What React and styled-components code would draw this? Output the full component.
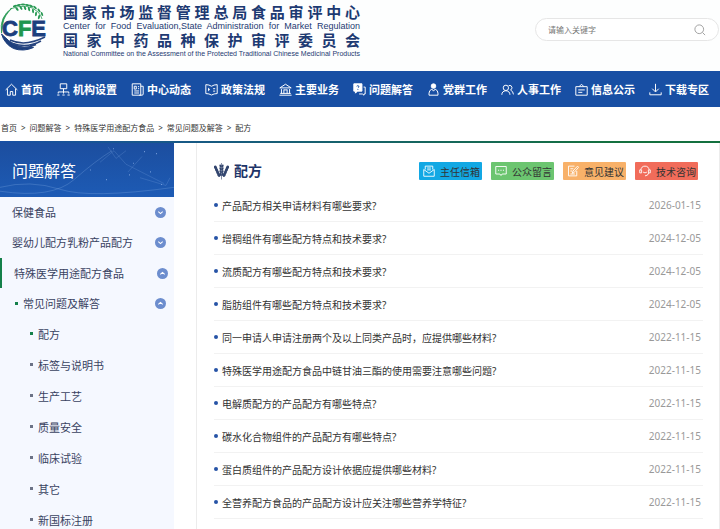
import React from 'react';
import styled, { createGlobalStyle } from 'styled-components';

const GlobalStyle = createGlobalStyle`
  * {
    box-sizing: border-box;
  }
  body {
    margin: 0;
    background: #fff;
    color: #333;
    font-family: "Noto Sans", "Noto Sans CJK SC", sans-serif;
    font-size: 10px;
  }
  a {
    color: inherit;
    text-decoration: none;
  }
  ul, ol {
    margin: 0;
    padding: 0;
    list-style: none;
  }
  button {
    border: 0;
    padding: 0;
    background: none;
    cursor: pointer;
  }
`;

const navItems = [
  { label: '首页', icon: 'home' },
  { label: '机构设置', icon: 'org' },
  { label: '中心动态', icon: 'news' },
  { label: '政策法规', icon: 'policy' },
  { label: '主要业务', icon: 'bank' },
  { label: '问题解答', icon: 'faq' },
  { label: '党群工作', icon: 'person' },
  { label: '人事工作', icon: 'people' },
  { label: '信息公示', icon: 'board' },
  { label: '下载专区', icon: 'download' },
];

const crumbs = ['首页', '问题解答', '特殊医学用途配方食品', '常见问题及解答', '配方'];

const leaves = ['配方', '标签与说明书', '生产工艺', '质量安全', '临床试验', '其它', '新国标注册'];

const services = [
  { label: '主任信箱', icon: 'mail', color: '#12a8e4' },
  { label: '公众留言', icon: 'chat', color: '#6cc570' },
  { label: '意见建议', icon: 'note', color: '#f8b169' },
  { label: '技术咨询', icon: 'headset', color: '#f16c5a' },
];

const questions = [
  { title: '产品配方相关申请材料有哪些要求?', date: '2026-01-15' },
  { title: '增稠组件有哪些配方特点和技术要求?', date: '2024-12-05' },
  { title: '流质配方有哪些配方特点和技术要求?', date: '2024-12-05' },
  { title: '脂肪组件有哪些配方特点和技术要求?', date: '2024-12-05' },
  { title: '同一申请人申请注册两个及以上同类产品时，应提供哪些材料?', date: '2022-11-15' },
  { title: '特殊医学用途配方食品中链甘油三酯的使用需要注意哪些问题?', date: '2022-11-15' },
  { title: '电解质配方的产品配方有哪些特点?', date: '2022-11-15' },
  { title: '碳水化合物组件的产品配方有哪些特点?', date: '2022-11-15' },
  { title: '蛋白质组件的产品配方设计依据应提供哪些材料?', date: '2022-11-15' },
  { title: '全营养配方食品的产品配方设计应关注哪些营养学特征?', date: '2022-11-15' },
];

const icons = {
  home: <path d="M.8 8.500 8 1.500l7.200 7M3 7v8h3.500v-4.500h3V15H13V7" />,
  org: (
    <>
      <path d="M4 1h8v6H4zM8 7v4M1.500 13v-2h13v2" />
      <path d="M.3 14.800h2.800M6.600 14.800h2.800M12.900 14.800h2.800M8 11v2" />
    </>
  ),
  news: (
    <>
      <path d="M1.500 1h10.500v14H1.500zM12 4h3v9.500q0 1.500-1.500 1.500H10" />
      <path d="M4 4h2.500v3.500H4zM8.500 4.500H10M8.500 7H10M4 9.800h6M4 12.300h6" />
    </>
  ),
  policy: (
    <>
      <path d="M1 2q4 0 7 2 3-2 7-2v11q-4 0-7 1.800Q5 13 1 13z" />
      <path d="M4.500 6v4M3.800 8h2M10 7h2.500M10 10h2.500" />
    </>
  ),
  bank: (
    <>
      <path d="M1 6 8 1.500 15 6zM3 7.500V13M6 8v5M10 8v5M13 7.500V13" />
      <path d="M1.500 12.800h13M.5 15h15M6 8.500h4" />
    </>
  ),
  faq: (
    <>
      <path d="M1 1h10v9H5.500L3 12.500V10H1z" fill="#fff" />
      <path d="M13 5h2v8.500h-1.500V15l-2-1.500H7.500" />
      <path d="M4.500 4Q6 2.500 7.300 4 7.500 5.200 6 6M6 7.500v1" stroke="#184fa4" />
    </>
  ),
  person: (
    <>
      <circle cx="8" cy="3.800" r="2.800" fill="#fff" />
      <path d="M6 7.500Q2.500 9 2.500 12.500V15h11v-2.500Q13.500 9 10 7.500L8 10z" />
    </>
  ),
  people: (
    <>
      <circle cx="6" cy="6" r="3.300" />
      <path d="M1 14.500Q1 10 6 9.500q5 .5 5 5M9.500 3q3.500-.8 4 2.500.1 2-1.800 3.200Q15 10 15.300 14" />
    </>
  ),
  board: (
    <>
      <path d="M1 4.500h14V15H1zM5 4.500 8 1.500l3 3" />
      <path d="M4 8.500h8M4 11.500h5" />
    </>
  ),
  download: <path d="M8 1v9.500M4 7l4 4 4-4M1 11.500v3h14v-3" />,
  search: (
    <>
      <circle cx="7" cy="7" r="5.800" />
      <path d="m11.300 11.300 3.500 3.500" />
    </>
  ),
  mail: (
    <>
      <path d="M3 6V1.500h10V6M1 6l7 5 7-5v9H1zM5.500 4h5M5.500 6.500h5" />
    </>
  ),
  chat: (
    <>
      <path d="M1 2h14v10H9.500L8 14l-1.500-2H1z" />
      <path d="M4 7h1.500M7.200 7h1.600M10.500 7H12" />
    </>
  ),
  note: (
    <>
      <path d="M13 8v6.500H2v-13h8" />
      <path d="M4.500 5h4M4.500 8h2.500M7 11l1-3 6-6.500L15.500 3 9.500 10zM4.500 12h6" />
    </>
  ),
  headset: (
    <>
      <path d="M2.500 7Q3 1.500 8 1.500T13.500 7M2.500 6.500H1v4h2.500v-4M13.500 6.500H15v4h-2.500v-4M13 10.500Q12 14.500 8 14.500" />
      <path d="M5.500 9.500q2.500 2 5 0" />
    </>
  ),
};

const Icon = ({ name, size = 13, weight = 1.2 }) => (
  <svg
    width={size}
    height={size}
    viewBox="0 0 16 16"
    fill="none"
    stroke="currentColor"
    strokeWidth={weight}
    aria-hidden="true"
  >
    {icons[name]}
  </svg>
);

const Header = styled.header`
  display: flex;
  justify-content: space-between;
  align-items: flex-start;
  height: 71px;
  background: #fdfefe;
`;

const Brand = styled.a`
  display: flex;
  gap: 15px;
  padding-top: 3px;
  color: #1d3a72;
`;

const BrandText = styled.span`
  display: flex;
  flex-direction: column;
  width: 297px;
  text-align: justify;
  text-align-last: justify;
  white-space: nowrap;
`;

const BrandName = styled.span`
  font-size: 15px;
  font-weight: 700;
  line-height: 18px;
`;

const BrandLatin = styled.span`
  font-family: "Liberation Sans", sans-serif;
  font-size: ${({ $small }) => ($small ? '7px' : '9px')};
  line-height: 10px;
`;

const Search = styled.form`
  display: flex;
  align-items: center;
  width: 184px;
  height: 23px;
  margin: 18px 1px 0 0;
  padding: 0 12px;
  border: 1px solid #e6e6e6;
  border-radius: 12px;
  background: #fff;
  color: #999;

  input {
    flex: 1;
    min-width: 0;
    padding: 0;
    border: 0;
    outline: 0;
    background: none;
    color: #333;
    font: inherit;
    font-size: 8px;
  }
  input::placeholder {
    color: #777;
  }
  button {
    display: flex;
    color: inherit;
  }
`;

const Nav = styled.nav`
  background: #184fa4;

  ul {
    display: flex;
    justify-content: space-between;
    padding: 0 11px 0 5px;
  }
`;

const NavLink = styled.a`
  display: flex;
  align-items: center;
  gap: 3px;
  height: 36px;
  color: #fff;
  font-size: 11px;
  font-weight: 700;
  white-space: nowrap;
`;

const Crumbs = styled.nav`
  ol {
    display: flex;
    gap: 4px;
    height: 34px;
    padding: 8px 1px 0;
    font-size: 8px;
    line-height: 26px;
  }
  li {
    display: flex;
    gap: 4px;
  }
  li + li::before {
    content: ">";
  }
`;

const Page = styled.div`
  display: grid;
  grid-template-columns: 174px minmax(0, 1fr);
  column-gap: 22px;
  border-top: 2px solid;
  border-image: linear-gradient(90deg, #184fa4, #14703f 85%) 1;
`;

const Sidebar = styled.aside`
  background: #f5f8ff;
  color: #39425f;
`;

const Banner = styled.h2`
  position: relative;
  height: 54px;
  margin: 0;
  padding: 0 12px;
  background: linear-gradient(180deg, #1c4e9f, #1d5bb5);
  color: #fff;
  font-size: 16px;
  font-weight: 400;
  line-height: 56px;

  svg {
    position: absolute;
    inset: 0;
    width: 100%;
    height: 100%;
  }
  span {
    position: relative;
  }
`;

const MenuRow = styled.div`
  display: flex;
  align-items: center;
  justify-content: space-between;
  height: 30px;
  padding: 0 8px 0 12px;
  font-size: 11px;
`;

const MenuGroup = styled.li`
  > ${MenuRow} {
    margin-top: ${({ $open }) => ($open ? '1px' : 0)};
    border-left: ${({ $open }) => ($open ? '2px solid #14804a' : 0)};
    padding-right: ${({ $open }) => ($open ? '6px' : '8px')};
  }
`;

const Bulleted = styled.a`
  display: flex;
  align-items: center;
  gap: 5px;

  &::before {
    content: "";
    width: 3px;
    height: 3px;
    background: ${({ $active }) => ($active ? '#14804a' : '#6b7286')};
  }
`;

const SubRow = styled(MenuRow)`
  padding-left: 15px;
`;

const LeafRow = styled(MenuRow)`
  height: 31px;
  padding-left: 30px;
`;

const Toggle = styled.button`
  display: flex;
  align-items: center;
  justify-content: center;
  width: 11px;
  height: 11px;
  border-radius: 50%;
  background: #6c8dce;
  color: #fff;
`;

const Content = styled.main`
  padding: 19px 16px 0 17px;
  border: solid #ececec;
  border-width: 0 1px;
`;

const ContentHead = styled.div`
  display: flex;
  align-items: center;
  justify-content: space-between;
  height: 18px;
  margin-bottom: 9px;
  padding-right: 5px;
`;

const Title = styled.h1`
  display: flex;
  align-items: center;
  gap: 5px;
  margin: 0;
  color: #1d3468;
  font-size: 14px;
  line-height: 18px;
`;

const Services = styled.div`
  display: flex;
  gap: 9px;
`;

const ServiceLink = styled.a`
  display: flex;
  align-items: center;
  justify-content: space-between;
  width: 63px;
  height: 18px;
  padding: 0 2px 0 4px;
  border-radius: 1px;
  background: ${({ $color }) => $color};

  svg {
    color: #fff;
  }
`;

const Question = styled.li`
  display: flex;
  align-items: center;
  justify-content: space-between;
  height: 33px;
  padding-right: 2px;
  border-bottom: 1px solid #f2f2f2;

  a {
    display: flex;
    align-items: center;
    gap: 4px;
  }
  a::before {
    content: "";
    width: 4px;
    height: 4px;
    border-radius: 50%;
    background: #2653a6;
  }
  time {
    color: #999;
  }
`;

const Emblem = () => (
  <svg width="48" height="49" viewBox="0 0 48 49" role="img" aria-label="CFE">
    <path d="M1.500 30Q-1 14 12 5 4 13 3 20z" fill="#2a9a55" stroke="#2a9a55" strokeWidth=".8" />
    <path d="M10 6Q28-1 38 9q3 3 4 7" fill="none" stroke="#2a9a55" strokeWidth=".8" />
    {[
      [15, 3, -50], [19, 2, -40], [23, 1.5, -30], [27, 2, -18], [31, 3, -5], [35, 4.500, 10], [39, 7.500, 25], [42, 11, 40],
      [17, 6, 20], [21, 5, 28], [25, 5, 36], [29, 6, 45], [33, 8, 55], [36, 11, 65], [39, 14, 75],
    ].map(([x, y, r]) => (
      <ellipse key={`${x}-${y}`} cx={x} cy={y} rx="2.200" ry="1" fill="#2a9a55" transform={`rotate(${r + 30} ${x} ${y})`} />
    ))}
    <path d="M1.500 31q3 10 12 14.500 10 3.500 20-1Q16 47 1.500 31z" fill="#1d3f7d" stroke="#1d3f7d" />
    <path d="M10 37q15 7 35-3M13 40.500q14 5 28-2.500M17 43.500q10 2.500 19-2" fill="none" stroke="#27457f" strokeWidth="1.500" />
    <text x="2" y="33" fontFamily="Liberation Sans, sans-serif" fontSize="22" fontWeight="700" fill="#1d3f7d" stroke="#1d3f7d" strokeWidth=".8">
      C<tspan fill="#1f9650" stroke="#1f9650">F</tspan>E
    </text>
  </svg>
);

const BannerArt = () => (
  <svg viewBox="0 0 174 56" preserveAspectRatio="none" fill="none" stroke="#8eb4ea" aria-hidden="true">
    <path d="M0 50Q52 58 74 38T112 8M0 46q30-8 60 2t114-2" strokeOpacity=".35" strokeWidth=".8" />
    <path d="m100 20 14-12 12 14 38 20M108 4l8 12 10-8M128 30l14-16M140 36l26 8 4-8" strokeOpacity=".3" strokeWidth=".7" />
    <path d="M106 38h1M113 6h1M129 33h1M133 21h1M144 9h1M156 11h1M161 43h1M150 30h1M90 28h1" strokeOpacity=".7" strokeWidth="1.200" />
  </svg>
);

const Wheat = () => (
  <svg width="15" height="17" viewBox="0 0 15 17" fill="#33466f" aria-hidden="true">
    {[0, 1, 2, 3].map((i) => (
      <g key={i}>
        <ellipse cx="6.500" cy={3 + i * 2.8} rx="1" ry="1.600" transform={`rotate(-25 6.500 ${3 + i * 2.8})`} />
        <ellipse cx="8.500" cy={3 + i * 2.8} rx="1" ry="1.600" transform={`rotate(25 8.500 ${3 + i * 2.8})`} />
        <ellipse cx={1.500 + i * 1.1} cy={4.500 + i * 2.5} rx="1.500" ry="1.900" transform={`rotate(-30 ${1.500 + i * 1.1} ${4.500 + i * 2.5})`} />
        <ellipse cx={13.500 - i * 1.1} cy={4.500 + i * 2.5} rx="1.500" ry="1.900" transform={`rotate(30 ${13.500 - i * 1.1} ${4.500 + i * 2.5})`} />
      </g>
    ))}
    <path d="M7.200 0h.6v16.500h-.6z" />
  </svg>
);

const Chevron = ({ up, label }) => (
  <Toggle type="button" aria-label={label} aria-expanded={!!up}>
    <svg width="7" height="7" viewBox="0 0 8 8" fill="none" stroke="currentColor" strokeWidth="1.200">
      <path d={up ? 'M1.500 5 4 2.700 6.500 5' : 'M1.500 3 4 5.300 6.500 3'} />
    </svg>
  </Toggle>
);

const App = () => {
  return (
    <>
      <GlobalStyle />
      <Header>
        <Brand href="#">
          <Emblem />
          <BrandText>
            <BrandName>国家市场监督管理总局食品审评中心</BrandName>
            <BrandLatin>Center for Food Evaluation,State Administration for Market Regulation</BrandLatin>
            <BrandName>国家中药品种保护审评委员会</BrandName>
            <BrandLatin $small>National Committee on the Assessment of the Protected Traditional Chinese Medicinal Products</BrandLatin>
          </BrandText>
        </Brand>
        <Search role="search">
          <input type="text" placeholder="请输入关键字" aria-label="请输入关键字" />
          <button type="button" aria-label="搜索">
            <Icon name="search" size={12} />
          </button>
        </Search>
      </Header>

      <Nav>
        <ul>
          {navItems.map(({ label, icon }) => (
            <li key={label}>
              <NavLink href="#">
                <Icon name={icon} />
                {label}
              </NavLink>
            </li>
          ))}
        </ul>
      </Nav>

      <Crumbs>
        <ol>
          {crumbs.map((crumb) => (
            <li key={crumb}><a href="#">{crumb}</a></li>
          ))}
        </ol>
      </Crumbs>

      <Page>
        <Sidebar>
          <Banner>
            <BannerArt />
            <span>问题解答</span>
          </Banner>
          <ul>
            <MenuGroup>
              <MenuRow><a href="#">保健食品</a><Chevron label="保健食品" /></MenuRow>
            </MenuGroup>
            <MenuGroup>
              <MenuRow><a href="#">婴幼儿配方乳粉产品配方</a><Chevron label="婴幼儿配方乳粉产品配方" /></MenuRow>
            </MenuGroup>
            <MenuGroup $open>
              <MenuRow><a href="#">特殊医学用途配方食品</a><Chevron up label="特殊医学用途配方食品" /></MenuRow>
              <ul>
                <li>
                  <SubRow>
                    <Bulleted href="#" $active>常见问题及解答</Bulleted>
                    <Chevron up label="常见问题及解答" />
                  </SubRow>
                  <ul>
                    {leaves.map((leaf, i) => (
                      <li key={leaf}>
                        <LeafRow><Bulleted href="#" $active={i === 0}>{leaf}</Bulleted></LeafRow>
                      </li>
                    ))}
                  </ul>
                </li>
              </ul>
            </MenuGroup>
          </ul>
        </Sidebar>

        <Content>
          <ContentHead>
            <Title><Wheat />配方</Title>
            <Services>
              {services.map(({ label, icon, color }) => (
                <ServiceLink key={label} href="#" $color={color}>
                  <Icon name={icon} size={12} />
                  {label}
                </ServiceLink>
              ))}
            </Services>
          </ContentHead>
          <ul>
            {questions.map(({ title, date }) => (
              <Question key={title}>
                <a href="#">{title}</a>
                <time dateTime={date}>{date}</time>
              </Question>
            ))}
          </ul>
        </Content>
      </Page>
    </>
  );
};

export default App;
